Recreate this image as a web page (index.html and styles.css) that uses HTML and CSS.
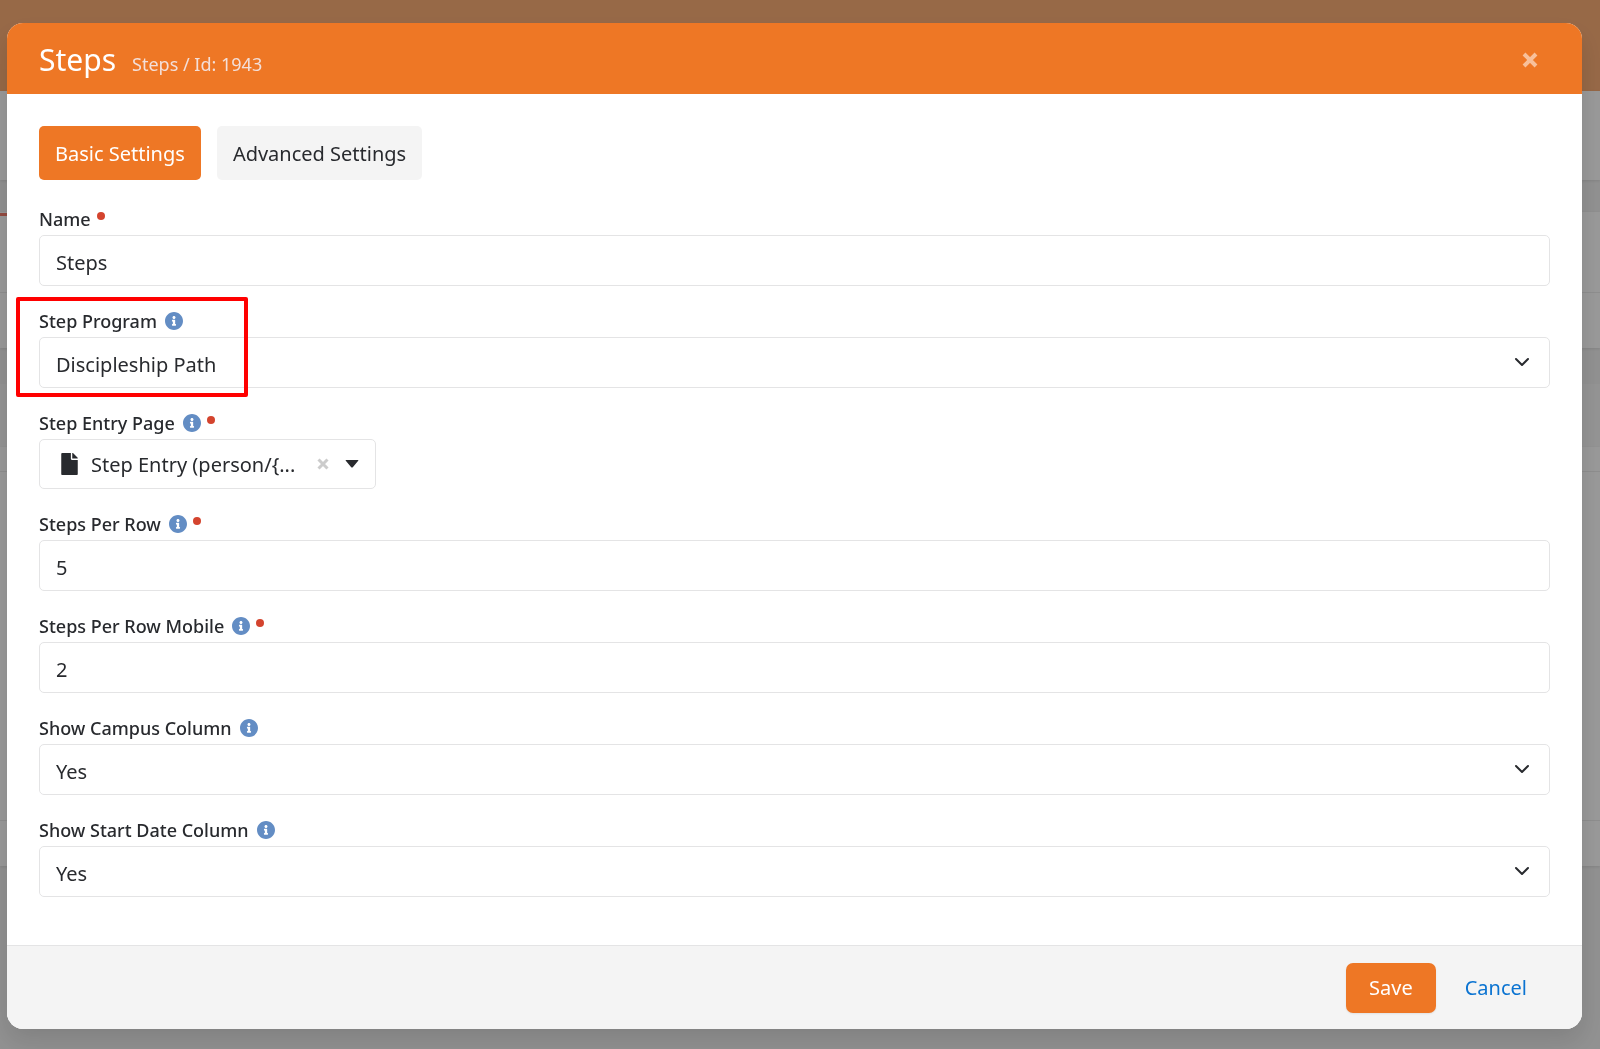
FILE: index.html
```html
<!DOCTYPE html>
<html lang="en">

<head>
    <meta charset="UTF-8" />
    <meta name="viewport" content="width=device-width, initial-scale=1.0" />
    <title>Steps</title>
    <link rel="stylesheet" href="styles.css">
</head>

<body>
    <!-- icons -->
    <svg class="icon-defs" aria-hidden="true">
        <symbol id="icon-info" viewBox="8 8 496 496">
            <path d="M256 8C119.043 8 8 119.083 8 256c0 136.997 111.043 248 248 248s248-111.003 248-248C504 119.083 392.957 8 256 8zm0 110c23.196 0 42 18.804 42 42s-18.804 42-42 42-42-18.804-42-42 18.804-42 42-42zm56 254c0 6.627-5.373 12-12 12h-88c-6.627 0-12-5.373-12-12v-24c0-6.627 5.373-12 12-12h12v-64h-12c-6.627 0-12-5.373-12-12v-24c0-6.627 5.373-12 12-12h64c6.627 0 12 5.373 12 12v100h12c6.627 0 12 5.373 12 12v24z" />
        </symbol>
        <symbol id="icon-file" viewBox="0 0 384 512">
            <path d="M224 136V0H24C10.7 0 0 10.7 0 24v464c0 13.3 10.7 24 24 24h336c13.3 0 24-10.7 24-24V160H248c-13.2 0-24-10.8-24-24zm160-14.1v6.1H256V0h6.1c6.4 0 12.5 2.5 17 7l97.9 98c4.5 4.5 7 10.6 7 16.9z" />
        </symbol>
        <symbol id="icon-times" viewBox="0 0 16 16">
            <path d="M2 2L14 14M14 2L2 14" fill="none" stroke="currentColor" stroke-width="4" />
        </symbol>
        <symbol id="icon-chevron" viewBox="0 0 16 10">
            <path d="M2 2L8 8L14 2" fill="none" stroke="currentColor" stroke-width="2" stroke-linecap="round" stroke-linejoin="round" />
        </symbol>
        <symbol id="icon-caret" viewBox="0 0 14 8">
            <path d="M1 0H13Q14 0 13 1L8 7Q7 8 6 7L1 1Q0 0 1 0z" />
        </symbol>
    </svg>

    <!-- page behind the modal -->
    <div class="page" aria-hidden="true">
        <div class="page-top"></div>
        <div class="page-panel page-header"></div>
        <div class="page-panel page-bio">
            <div class="page-badge"></div>
            <div class="page-row"></div>
        </div>
        <div class="page-tabs"></div>
        <div class="page-panel page-content">
            <div class="content-head"></div>
            <div class="content-body"></div>
            <div class="content-foot"></div>
        </div>
    </div>

    <div class="backdrop">
        <div class="modal" role="dialog" aria-labelledby="modal-title">
            <div class="modal-header">
                <h1 id="modal-title">Steps</h1>
                <small>Steps / Id: 1943</small>
                <button type="button" class="close" aria-label="Close">
                    <svg><use href="#icon-times" /></svg>
                </button>
            </div>

            <form class="modal-body">
                <div class="pills">
                    <button type="button" class="pill active">Basic Settings</button>
                    <button type="button" class="pill">Advanced Settings</button>
                </div>

                <div class="form-group">
                    <div class="label-row">
                        <label for="name">Name</label>
                        <span class="required"></span>
                    </div>
                    <input type="text" id="name" class="form-control" value="Steps" />
                </div>

                <div class="form-group highlight">
                    <div class="label-row">
                        <label for="program">Step Program</label>
                        <svg class="info"><use href="#icon-info" /></svg>
                    </div>
                    <div class="select-wrap">
                        <select id="program" class="form-control">
                            <option>Discipleship Path</option>
                        </select>
                        <svg><use href="#icon-chevron" /></svg>
                    </div>
                </div>

                <div class="form-group">
                    <div class="label-row">
                        <label for="entry-page">Step Entry Page</label>
                        <svg class="info"><use href="#icon-info" /></svg>
                        <span class="required"></span>
                    </div>
                    <div class="picker">
                        <button type="button" id="entry-page" class="picker-label">
                            <svg><use href="#icon-file" /></svg>
                            <span>Step Entry (person/{...</span>
                        </button>
                        <button type="button" class="picker-clear" aria-label="Clear">
                            <svg><use href="#icon-times" /></svg>
                        </button>
                        <button type="button" class="picker-caret" aria-label="Open">
                            <svg><use href="#icon-caret" /></svg>
                        </button>
                    </div>
                </div>

                <div class="form-group">
                    <div class="label-row">
                        <label for="per-row">Steps Per Row</label>
                        <svg class="info"><use href="#icon-info" /></svg>
                        <span class="required"></span>
                    </div>
                    <input type="text" id="per-row" class="form-control" value="5" />
                </div>

                <div class="form-group">
                    <div class="label-row">
                        <label for="per-row-mobile">Steps Per Row Mobile</label>
                        <svg class="info"><use href="#icon-info" /></svg>
                        <span class="required"></span>
                    </div>
                    <input type="text" id="per-row-mobile" class="form-control" value="2" />
                </div>

                <div class="form-group">
                    <div class="label-row">
                        <label for="campus">Show Campus Column</label>
                        <svg class="info"><use href="#icon-info" /></svg>
                    </div>
                    <div class="select-wrap">
                        <select id="campus" class="form-control">
                            <option>Yes</option>
                            <option>No</option>
                        </select>
                        <svg><use href="#icon-chevron" /></svg>
                    </div>
                </div>

                <div class="form-group">
                    <div class="label-row">
                        <label for="start-date">Show Start Date Column</label>
                        <svg class="info"><use href="#icon-info" /></svg>
                    </div>
                    <div class="select-wrap">
                        <select id="start-date" class="form-control">
                            <option>Yes</option>
                            <option>No</option>
                        </select>
                        <svg><use href="#icon-chevron" /></svg>
                    </div>
                </div>
            </form>

            <div class="modal-footer">
                <button type="button" class="btn-save">Save</button>
                <a href="#" class="btn-cancel">Cancel</a>
            </div>
        </div>
    </div>
</body>

</html>
```

FILE: styles.css
```css
* {
    box-sizing: border-box;
}

body {
    margin: 0;
    min-height: 100vh;
    overflow: hidden;
    font-family: "Segoe UI", "Noto Sans", "Open Sans", sans-serif;
    font-size: 20px;
    color: #282a2e;
    background-color: #f2f2f2;
}

button,
input,
select {
    margin: 0;
    padding: 0;
    border: 0;
    background: none;
    font: inherit;
    color: inherit;
}

button {
    cursor: pointer;
}

svg {
    display: block;
    fill: currentColor;
}

.icon-defs {
    position: absolute;
    width: 0;
    height: 0;
}

/* page behind the modal */
.page-top {
    height: 91px;
    background-color: #fcaf77;
}

.page-panel {
    background-color: #ffffff;
    box-shadow: 0 1px 3px rgba(0, 0, 0, 0.1);
}

.page-header {
    height: 89px;
    margin-bottom: 32px;
}

.page-bio {
    height: 136px;
    margin-bottom: 36px;
}

.page-badge {
    width: 120px;
    height: 4px;
    border-bottom: 3px solid #f47c6c;
}

.page-row {
    height: 77px;
    border-bottom: 1px solid #ececec;
}

.page-tabs {
    height: 63px;
    background-color: #f7f7f7;
}

.page-content {
    height: 419px;
}

.content-head {
    height: 25px;
    border-bottom: 1px solid #ececec;
}

.content-body {
    height: 349px;
    border-bottom: 1px solid #ececec;
}

/* modal */
.backdrop {
    position: fixed;
    inset: 0;
    padding: 23px 18px 21px 7px;
    overflow: auto;
    background-color: rgba(0, 0, 0, 0.4);
}

.modal {
    overflow: hidden;
    border-radius: 16px;
    background-color: #ffffff;
    box-shadow: 0 12px 24px rgba(0, 0, 0, 0.12);
}

.modal-header {
    display: flex;
    align-items: baseline;
    gap: 16px;
    height: 71px;
    padding: 0 32px;
    line-height: 74px;
    color: #ffffff;
    background-color: #ee7725;
}

.modal-header h1 {
    margin: 0;
    font-size: 30px;
    font-weight: 400;
}

.modal-header small {
    font-size: 18px;
    color: #f3dfd9;
}

.close {
    align-self: center;
    margin-left: auto;
    padding: 14px 12px 12px;
    color: #f8c09a;
}

.close svg {
    width: 16px;
    height: 16px;
}

.modal-body {
    padding: 32px 32px 26px;
}

.pills {
    display: flex;
    gap: 16px;
    margin-bottom: 26px;
}

.pill {
    height: 54px;
    padding: 0 16px;
    border-radius: 5px;
    background-color: #f4f4f4;
}

.pill.active {
    color: #ffffff;
    background-color: #ee7725;
}

.form-group {
    margin-bottom: 22px;
}

.label-row {
    display: flex;
    align-items: center;
    height: 26px;
    margin-bottom: 3px;
    font-size: 18px;
    font-weight: 500;
}

.info {
    width: 18px;
    height: 18px;
    margin-left: 8px;
    color: #638dc4;
}

.required {
    width: 8px;
    height: 8px;
    margin-left: 6px;
    margin-bottom: 6px;
    border-radius: 50%;
    background-color: #d4442e;
}

.form-control {
    display: block;
    width: 100%;
    height: 51px;
    padding: 3px 16px 0;
    border: 1px solid #e4e4e5;
    border-radius: 5px;
    background-color: #ffffff;
    appearance: none;
}

.select-wrap {
    position: relative;
}

.select-wrap svg {
    position: absolute;
    top: 20px;
    right: 20px;
    width: 16px;
    height: 10px;
    pointer-events: none;
}

.picker {
    display: flex;
    align-items: center;
    width: 337px;
    height: 50px;
    padding-left: 21px;
    padding-right: 16px;
    border: 1px solid #e4e4e5;
    border-radius: 5px;
}

.picker-label {
    display: flex;
    flex: 1;
    align-items: center;
    gap: 13px;
    white-space: nowrap;
}

.picker-label svg {
    width: 17px;
    height: 22px;
}

.picker-clear {
    margin-right: 16px;
    color: #cccccc;
}

.picker-clear svg {
    width: 12px;
    height: 12px;
}

.picker-caret svg {
    width: 14px;
    height: 8px;
}

/* red frame round the field */
.highlight {
    position: relative;
}

.highlight::after {
    content: "";
    position: absolute;
    box-sizing: border-box;
    top: -11px;
    left: -23px;
    width: 232px;
    height: 100px;
    border: 4px solid #ff0000;
    border-radius: 2px;
    pointer-events: none;
}

.modal-footer {
    display: flex;
    justify-content: flex-end;
    align-items: center;
    height: 84px;
    padding: 0 32px;
    border-top: 1px solid #e4e4e5;
    background-color: #f4f4f4;
}

.btn-save {
    height: 50px;
    padding: 0 23px;
    border-radius: 7px;
    color: #ffffff;
    background-color: #ee7725;
    box-shadow: 0 1px 2px rgba(0, 0, 0, 0.08);
}

.btn-cancel {
    padding: 0 23px;
    margin-left: 6px;
    color: #0a73d1;
    text-decoration: none;
}
```
